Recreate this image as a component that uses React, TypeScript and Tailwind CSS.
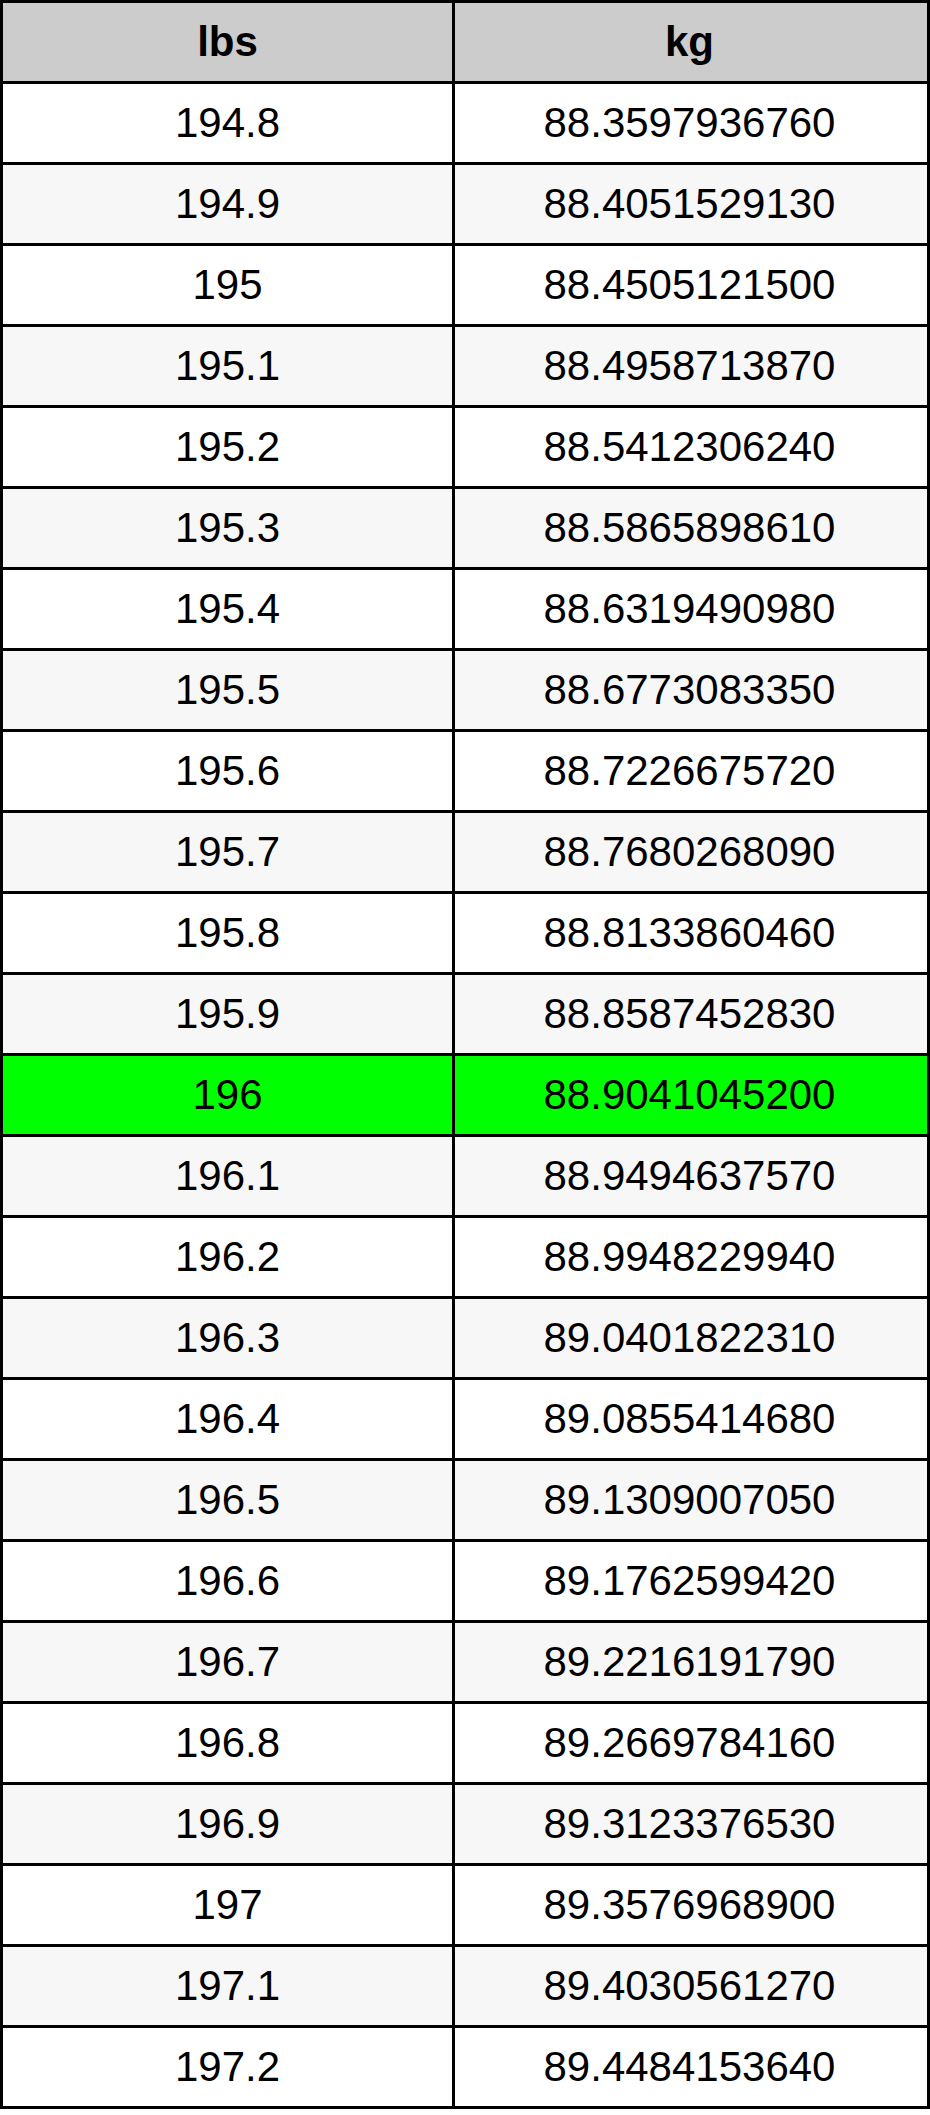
import React from "react";

const rows: [string, string][] = [
  ["194.8", "88.3597936760"],
  ["194.9", "88.4051529130"],
  ["195", "88.4505121500"],
  ["195.1", "88.4958713870"],
  ["195.2", "88.5412306240"],
  ["195.3", "88.5865898610"],
  ["195.4", "88.6319490980"],
  ["195.5", "88.6773083350"],
  ["195.6", "88.7226675720"],
  ["195.7", "88.7680268090"],
  ["195.8", "88.8133860460"],
  ["195.9", "88.8587452830"],
  ["196", "88.9041045200"],
  ["196.1", "88.9494637570"],
  ["196.2", "88.9948229940"],
  ["196.3", "89.0401822310"],
  ["196.4", "89.0855414680"],
  ["196.5", "89.1309007050"],
  ["196.6", "89.1762599420"],
  ["196.7", "89.2216191790"],
  ["196.8", "89.2669784160"],
  ["196.9", "89.3123376530"],
  ["197", "89.3576968900"],
  ["197.1", "89.4030561270"],
  ["197.2", "89.4484153640"],
];

function Row({
  left,
  right,
  className,
  first,
}: {
  left: string;
  right: string;
  className: string;
  first?: boolean;
}) {
  return (
    <div
      className={`grid grid-cols-[449px_472px] ${first ? "h-[78px]" : "h-[81px] border-t-[3px] border-black"} ${className}`}
    >
      <div className="flex items-center justify-center">{left}</div>
      <div className="flex items-center justify-center border-l-[3px] border-black">
        {right}
      </div>
    </div>
  );
}

export default function App() {
  return (
    <div className="min-h-[2115px] bg-white">
      <div
        className="w-[930px] border-[3px] border-black text-[42px] leading-none text-black"
        style={{ fontFamily: '"Liberation Sans", Arial, sans-serif' }}
      >
        <Row left="lbs" right="kg" className="bg-[#cccccc] font-bold" first />
        {rows.map(([lbs, kg], i) => {
          const bg =
            lbs === "196" ? "bg-[#00ff00]" : i % 2 === 0 ? "bg-white" : "bg-[#f7f7f7]";
          return <Row key={lbs} left={lbs} right={kg} className={bg} />;
        })}
      </div>
    </div>
  );
}
